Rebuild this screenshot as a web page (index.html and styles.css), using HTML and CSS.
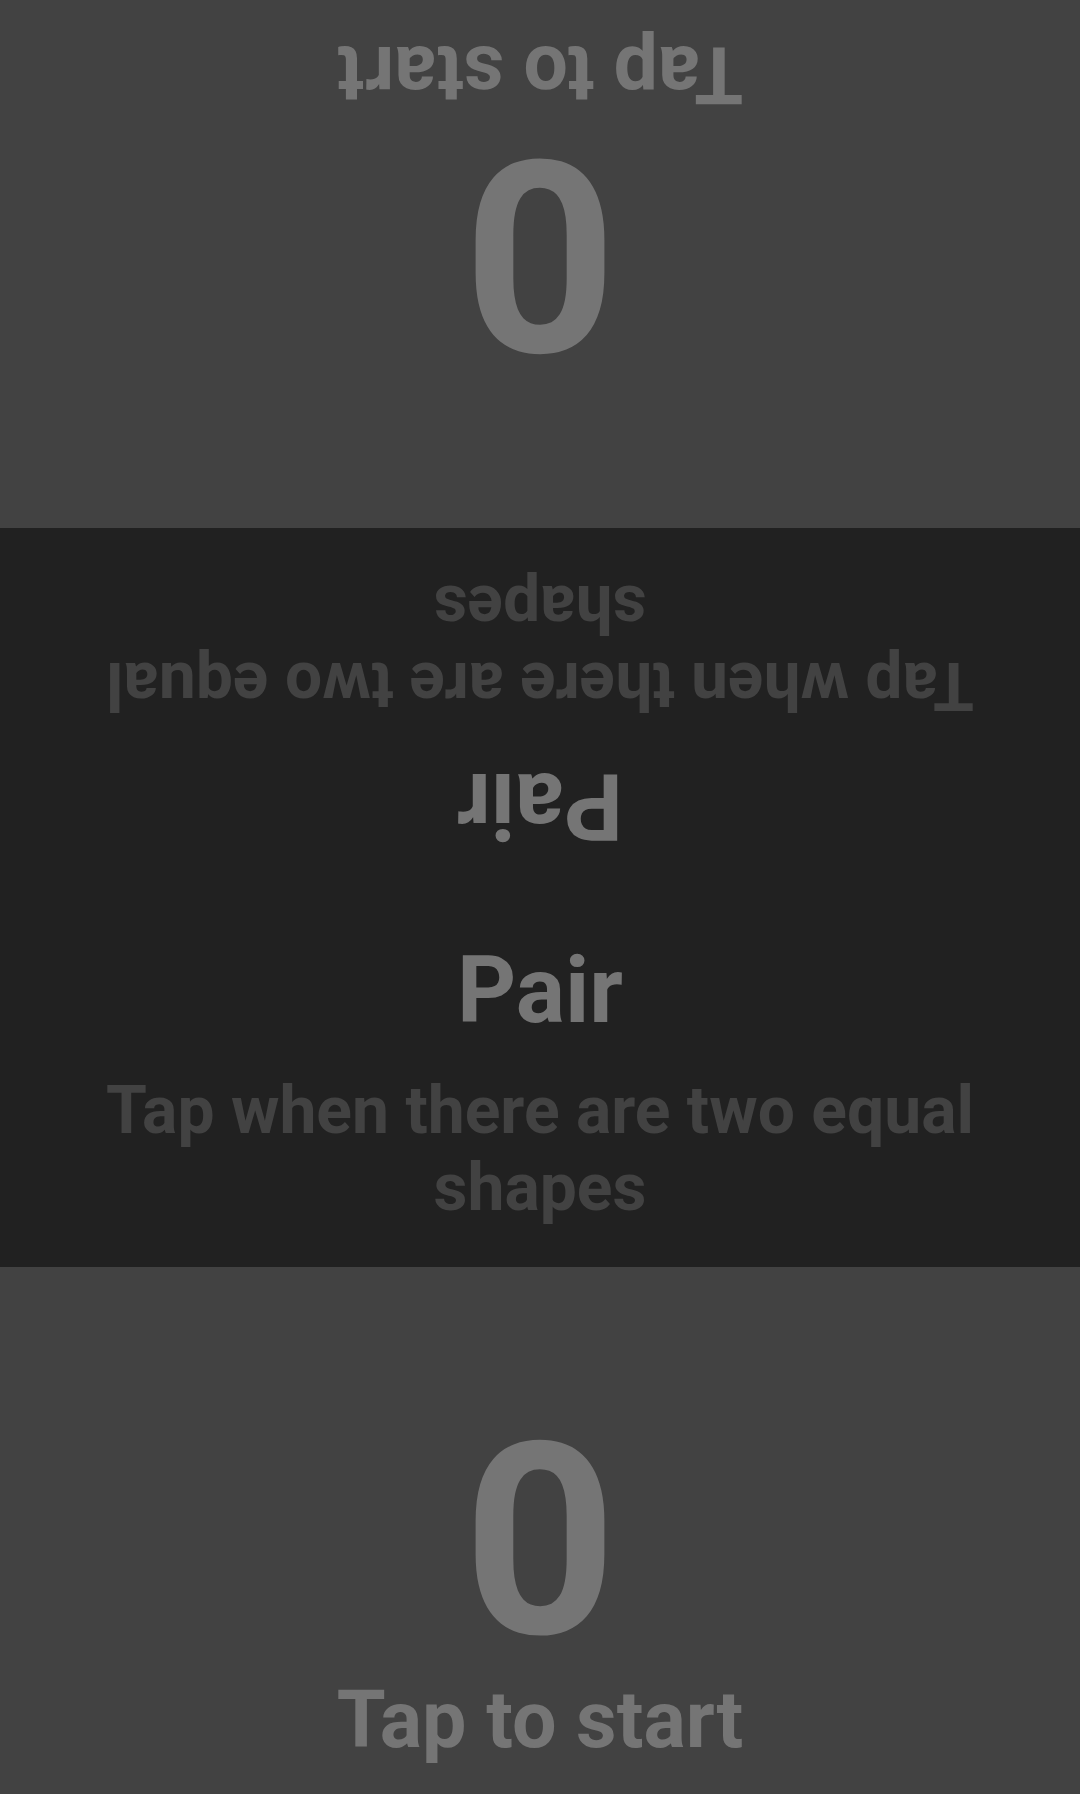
FILE: index.html
```html
<!DOCTYPE html>
<html>
<head>
<meta charset="utf-8">
<link rel="stylesheet" href="styles.css">
</head>
<body>
<div class="app">
  <section class="player player-top">
    <div class="player-inner flipped">
      <div class="score">0</div>
      <div class="hint">Tap to start</div>
    </div>
  </section>
  <section class="rules">
    <div class="rule-half flipped">
      <div class="rule-title">Pair</div>
      <div class="rule-desc">Tap when there are two equal shapes</div>
    </div>
    <div class="rule-half">
      <div class="rule-title">Pair</div>
      <div class="rule-desc">Tap when there are two equal shapes</div>
    </div>
  </section>
  <section class="player player-bottom">
    <div class="player-inner">
      <div class="score">0</div>
      <div class="hint">Tap to start</div>
    </div>
  </section>
</div>
</body>
</html>
```

FILE: styles.css
```css
html, body {
  margin: 0;
  padding: 0;
}
body {
  width: 1080px;
  height: 1794px;
  overflow: hidden;
  font-family: Roboto, "Noto Sans", sans-serif;
  font-weight: 700;
}
.app {
  display: flex;
  flex-direction: column;
  height: 1794px;
}
.player {
  background: #424242;
  color: #757575;
  display: flex;
}
.player-top {
  height: 528px;
}
.player-bottom {
  height: 527px;
}
.player-inner {
  flex: 1;
  display: flex;
  flex-direction: column;
  align-items: center;
  justify-content: flex-end;
  padding-bottom: 34px;
  gap: 5px;
}
.flipped {
  transform: rotate(180deg);
}
.score {
  font-size: 268px;
  line-height: 268px;
}
.hint {
  font-size: 79px;
  line-height: 80px;
}
.rules {
  height: 739px;
  background: #212121;
  display: flex;
  flex-direction: column;
}
.rule-half {
  flex: 1;
  display: flex;
  flex-direction: column;
  align-items: center;
  justify-content: flex-start;
  padding: 47px 64px 0;
  box-sizing: border-box;
  text-align: center;
}
.rule-title {
  font-size: 92px;
  line-height: 92px;
  color: #757575;
}
.rule-desc {
  margin-top: 35px;
  font-size: 66px;
  line-height: 77px;
  color: #424242;
}
```
